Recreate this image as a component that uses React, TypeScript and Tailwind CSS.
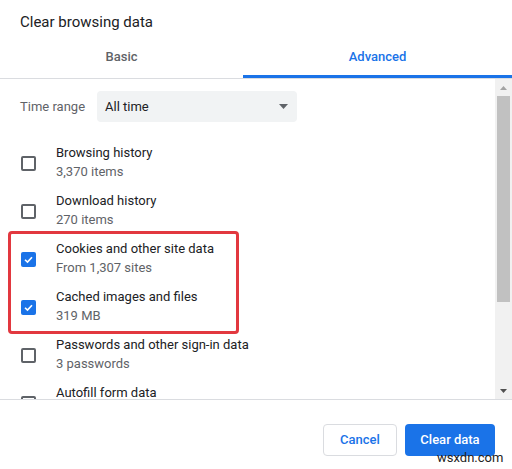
const ROWS = [
  { title: 'Browsing history', sub: '3,370 items', checked: false },
  { title: 'Download history', sub: '270 items', checked: false },
  { title: 'Cookies and other site data', sub: 'From 1,307 sites', checked: true },
  { title: 'Cached images and files', sub: '319 MB', checked: true },
  { title: 'Passwords and other sign-in data', sub: '3 passwords', checked: false },
  { title: 'Autofill form data', sub: '\u00a0', checked: false },
];

function Checkbox({ checked }: { checked: boolean }) {
  if (checked) {
    return (
      <div className="w-[15px] h-[15px] shrink-0 rounded-[2px] bg-[#1a73e8] flex items-center justify-center">
        <svg width="11" height="11" viewBox="0 0 12 12">
          <path d="M2.2 6.3 L4.9 8.9 L9.8 3.5" fill="none" stroke="#fff" strokeWidth="1.8" />
        </svg>
      </div>
    );
  }
  return (
    <div className="w-[15px] h-[15px] shrink-0 rounded-[2px] border-2 border-[#5f6368]" />
  );
}

export default function App() {
  return (
    <div
      className="relative w-[512px] h-[469px] bg-white overflow-hidden flex flex-col text-[#202124]"
      style={{ fontFamily: 'Roboto, "Liberation Sans", Arial, sans-serif' }}
    >
      {/* Title */}
      <div className="h-[44px] pt-[13px] pl-5 text-[15px] leading-[18px]">
        Clear browsing data
      </div>

      {/* Tabs */}
      <div className="flex h-[35px] border-b border-[#dadce0]">
        <div className="w-[243px] pt-[4px] text-center text-[13px] leading-[18px] font-medium text-[#5f6368]">
          Basic
        </div>
        <div className="flex-1 pt-[4px] text-center text-[13px] leading-[18px] font-medium text-[#1a73e8] border-b-[3px] border-[#1a73e8]">
          Advanced
        </div>
      </div>

      {/* Body */}
      <div className="h-[320px] flex">
        <div className="flex-1 overflow-hidden">
          <div className="mt-[12px] flex items-center pl-5">
            <span className="w-[77px] text-[13px] text-[#5f6368]">Time range</span>
            <div className="w-[200px] h-[31px] rounded bg-[#f1f3f4] flex items-center justify-between pl-2 pr-[9px]">
              <span className="text-[13px] text-[#202124]">All time</span>
              <svg width="9" height="5" viewBox="0 0 9 5">
                <path d="M0 0 H9 L4.5 5 Z" fill="#5f6368" />
              </svg>
            </div>
          </div>

          <div className="mt-[17px]">
            {ROWS.map((r) => (
              <div key={r.title} className="h-[48px] flex items-center pl-[21px] gap-5">
                <Checkbox checked={r.checked} />
                <div className="flex flex-col">
                  <span className="text-[13px] leading-[18px] text-[#202124]">{r.title}</span>
                  <span className="text-[13px] leading-[20px] text-[#5f6368]">{r.sub}</span>
                </div>
              </div>
            ))}
          </div>
        </div>

        {/* Scrollbar */}
        <div className="w-[17px] bg-[#f1f1f1] flex flex-col items-center">
          <div className="h-[17px] flex items-center justify-center">
            <svg width="7" height="4" viewBox="0 0 7 4">
              <path d="M3.5 0 L7 4 H0 Z" fill="#a3a3a3" />
            </svg>
          </div>
          <div className="w-[13px] h-[206px] bg-[#c1c1c1]" />
          <div className="flex-1" />
          <div className="h-[17px] flex items-center justify-center">
            <svg width="7" height="4" viewBox="0 0 7 4">
              <path d="M0 0 H7 L3.5 4 Z" fill="#505050" />
            </svg>
          </div>
        </div>
      </div>

      {/* Footer */}
      <div className="flex-1 border-t border-[#dadce0] flex justify-end items-start pt-[24px] pr-[17px] gap-2">
        <button className="h-[32px] w-[74px] rounded border border-[#dadce0] bg-white text-[13px] font-medium text-[#1a73e8]">
          Cancel
        </button>
        <button className="h-[32px] w-[90px] rounded bg-[#1a73e8] text-[13px] font-medium text-white">
          Clear data
        </button>
      </div>

      {/* Highlight */}
      <div className="absolute left-[8px] top-[231px] w-[231px] h-[103px] border-[3px] border-[#e2383f] rounded-[4px]" />

      {/* Watermark */}
      <div className="absolute left-[437px] top-[451px] text-[13px] leading-[14px] text-[#222]">
        wsxdn.com
      </div>
    </div>
  );
}
